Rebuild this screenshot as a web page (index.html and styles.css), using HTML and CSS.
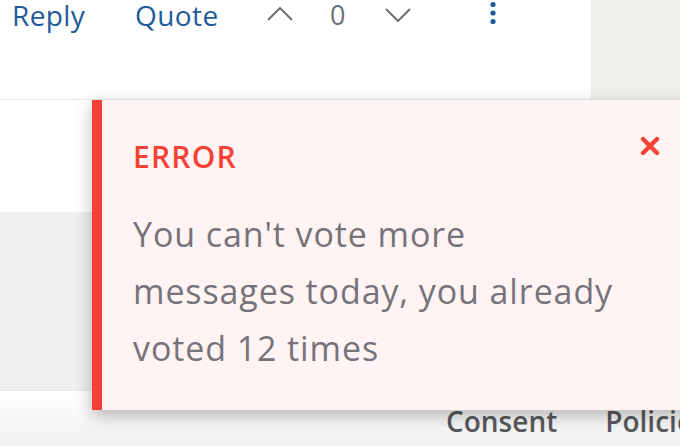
FILE: index.html
```html
<!DOCTYPE html>
<html lang="en">
<head>
<meta charset="utf-8">
<title>Vote error</title>
<link rel="stylesheet" href="styles.css">
</head>
<body>
<div class="page">
  <div class="top">
    <div class="post">
      <div class="actions">
        <a class="action action-reply">Reply</a>
        <a class="action action-quote">Quote</a>
        <span class="vote vote-up">
          <svg width="26" height="14" viewBox="0 0 26 14"><polyline points="1,13 13,1 25,13" fill="none" stroke="#6b6f75" stroke-width="2"/></svg>
        </span>
        <span class="count">0</span>
        <span class="vote vote-down">
          <svg width="26" height="14" viewBox="0 0 26 14"><polyline points="1,1 13,13 25,1" fill="none" stroke="#6b6f75" stroke-width="2"/></svg>
        </span>
        <span class="kebab">
          <svg width="8" height="26" viewBox="0 0 8 26"><circle cx="4" cy="4.5" r="2.6" fill="#1f5b9b"/><circle cx="4" cy="13" r="2.6" fill="#1f5b9b"/><circle cx="4" cy="21.5" r="2.6" fill="#1f5b9b"/></svg>
        </span>
      </div>
    </div>
    <aside class="side"></aside>
  </div>
  <div class="post-next"></div>
  <div class="content-grey"></div>
  <footer class="footer">
    <a class="footer-link">Consent</a>
    <a class="footer-link">Policies</a>
  </footer>
</div>

<div class="toast" role="alert">
  <div class="toast-title">ERROR</div>
  <div class="toast-body">You can't vote more messages today, you already voted 12 times</div>
  <span class="toast-close">
    <svg width="20" height="20" viewBox="0 0 20 20"><path d="M3 3 L17 17 M17 3 L3 17" stroke="#f44336" stroke-width="4.4" stroke-linecap="round"/></svg>
  </span>
</div>
</body>
</html>
```

FILE: styles.css
```css
html, body {
  margin: 0;
  padding: 0;
}
body {
  width: 680px;
  height: 446px;
  overflow: hidden;
  background: #efefef;
  font-family: "Open Sans", "Noto Sans", sans-serif;
}
.page {
  display: flex;
  flex-direction: column;
}
.top {
  display: flex;
  height: 100px;
}
.post {
  flex: 0 0 591px;
  background: #fff;
  border-bottom: 1px solid #ebebeb;
  box-sizing: border-box;
}
.side {
  flex: 1;
  background: #f1efec;
}
.actions {
  display: flex;
  align-items: flex-start;
  padding-left: 12px;
  height: 40px;
}
.action {
  font-size: 28px;
  line-height: 30px;
  letter-spacing: 0.4px;
  color: #1f5b9b;
  cursor: pointer;
}
.action-reply { width: 123px; }
.action-quote { width: 133px; }
.vote {
  display: flex;
  width: 62px;
}
.vote-up { padding-top: 7px; margin-left: -1px; width: 63px; }
.vote-down { padding-top: 8px; width: 105px; margin-left: -1px; }
.count {
  width: 56px;
  font-size: 27px;
  line-height: 30px;
  color: #6b6f75;
}
.kebab {
  display: flex;
  margin-left: -1px;
}
.post-next {
  height: 112px;
  background: #fff;
}
.content-grey {
  height: 178px;
  background: #efefef;
  border-bottom: 1px solid #e9e9e9;
}
.footer {
  display: flex;
  gap: 48px;
  height: 55px;
  box-sizing: border-box;
  padding: 12px 0 0 446px;
  white-space: nowrap;
  overflow: hidden;
  background: linear-gradient(#ffffff, #f1f1f1);
}
.footer-link {
  font-size: 28px;
  line-height: 36px;
  font-weight: 600;
  color: #5a5a5d;
}
.toast {
  position: absolute;
  left: 92px;
  top: 100px;
  width: 620px;
  height: 310px;
  box-sizing: border-box;
  padding: 37px 0 0 31px;
  background: #fff4f3;
  border-left: 10px solid #f44336;
  box-shadow: 0 6px 16px rgba(0, 0, 0, 0.28);
}
.toast-title {
  font-size: 30px;
  line-height: 40px;
  font-weight: 600;
  letter-spacing: 1.2px;
  color: #f44336;
}
.toast-body {
  margin-top: 29px;
  width: 495px;
  font-size: 34px;
  line-height: 57px;
  letter-spacing: 0.9px;
  color: #76737a;
}
.toast-close {
  position: absolute;
  left: 538px;
  top: 36px;
  display: flex;
}
```
